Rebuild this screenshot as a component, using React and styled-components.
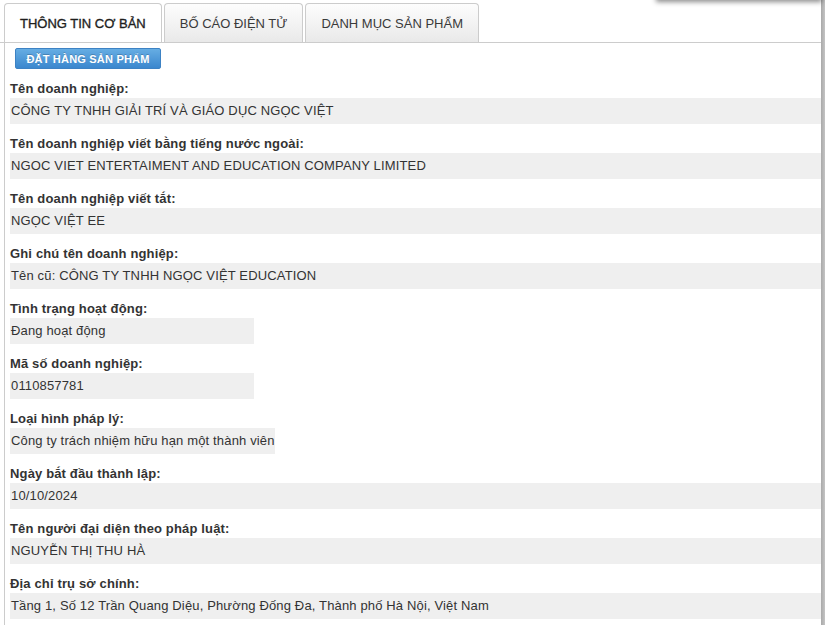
import React from "react";
import styled, { createGlobalStyle } from "styled-components";

const Global = createGlobalStyle`
  html, body { margin: 0; padding: 0; background: #fff; }
  body { font-family: "Liberation Sans", Arial, sans-serif; color: #333; overflow: hidden; }
  * { box-sizing: border-box; }
`;

const Page = styled.div`
  display: flex;
  height: 625px;
  position: relative;
`;

const Main = styled.div`
  flex: 1;
  min-width: 0;
`;

const RightEdge = styled.div`
  width: 4px;
  background: linear-gradient(to right, #a9a9a9, #c4c4c4);
`;

const TopShadow = styled.div`
  position: absolute;
  top: -20px;
  left: 657px;
  width: 164px;
  height: 20px;
  background: #fff;
  box-shadow: 0 1px 5px 1px rgba(0, 0, 0, 0.45);
`;

const TabBar = styled.div`
  display: flex;
  gap: 2px;
  padding: 3px 0 0 4px;
  border-bottom: 1px solid #ccc;
`;

const Tab = styled.div`
  height: 39px;
  padding: 0 15px;
  display: flex;
  align-items: center;
  border: 1px solid #ccc;
  border-bottom: none;
  border-radius: 4px 4px 0 0;
  font-size: 13px;
  white-space: nowrap;
  color: ${(p) => (p.$active ? "#1e1e1e" : "#3a3a3a")};
  -webkit-text-stroke: ${(p) => (p.$active ? "0.35px #1e1e1e" : "0")};
  background: ${(p) => (p.$active ? "#fff" : "linear-gradient(to bottom, #fdfdfd, #e9e9e9)")};
`;

const Panel = styled.div`
  margin-left: 4px;
  border-left: 1px solid #ccc;
  padding: 5px 0 0 5px;
  height: 600px;
`;

const OrderButton = styled.button`
  margin-left: 5px;
  height: 21px;
  width: 146px;
  padding: 0;
  border: 1px solid #3d82c4;
  border-radius: 2px;
  background: linear-gradient(to bottom, #66ade3, #3b87ce);
  color: #fff;
  font-family: "Liberation Sans", Arial, sans-serif;
  font-weight: bold;
  font-size: 11px;
  letter-spacing: 0.2px;
  text-shadow: 0 -1px 0 rgba(0, 0, 0, 0.2);
  display: block;
`;

const Field = styled.div`
  display: flex;
  flex-direction: column;
  align-items: ${(p) => (p.$narrow ? "flex-start" : "stretch")};
`;

const Label = styled.div`
  margin-top: 10px;
  line-height: 19px;
  font-size: 13px;
  font-weight: bold;
  letter-spacing: 0.15px;
  color: #333;
`;

const Value = styled.div`
  height: 26px;
  line-height: 26px;
  padding-left: 1px;
  font-size: 13px;
  letter-spacing: 0.15px;
  color: #333;
  background: #efefef;
  white-space: nowrap;
  min-width: ${(p) => (p.$narrow ? "244px" : "0")};
`;

const fields = [
  ["Tên doanh nghiệp:", "CÔNG TY TNHH GIẢI TRÍ VÀ GIÁO DỤC NGỌC VIỆT"],
  ["Tên doanh nghiệp viết bằng tiếng nước ngoài:", "NGOC VIET ENTERTAIMENT AND EDUCATION COMPANY LIMITED"],
  ["Tên doanh nghiệp viết tắt:", "NGỌC VIỆT EE"],
  ["Ghi chú tên doanh nghiệp:", "Tên cũ: CÔNG TY TNHH NGỌC VIỆT EDUCATION"],
  ["Tình trạng hoạt động:", "Đang hoạt động", true],
  ["Mã số doanh nghiệp:", "0110857781", true],
  ["Loại hình pháp lý:", "Công ty trách nhiệm hữu hạn một thành viên", true],
  ["Ngày bắt đầu thành lập:", "10/10/2024"],
  ["Tên người đại diện theo pháp luật:", "NGUYỄN THỊ THU HÀ"],
  ["Địa chỉ trụ sở chính:", "Tầng 1, Số 12 Trần Quang Diệu, Phường Đống Đa, Thành phố Hà Nội, Việt Nam"],
];

export default function App() {
  return (
    <>
      <Global />
      <Page>
        <Main>
          <TabBar>
            <Tab $active>THÔNG TIN CƠ BẢN</Tab>
            <Tab>BỐ CÁO ĐIỆN TỬ</Tab>
            <Tab>DANH MỤC SẢN PHẨM</Tab>
          </TabBar>
          <Panel>
            <OrderButton>ĐẶT HÀNG SẢN PHẨM</OrderButton>
            {fields.map(([label, value, narrow]) => (
              <Field key={label} $narrow={narrow}>
                <Label>{label}</Label>
                <Value $narrow={narrow}>{value}</Value>
              </Field>
            ))}
          </Panel>
        </Main>
        <RightEdge />
        <TopShadow />
      </Page>
    </>
  );
}
